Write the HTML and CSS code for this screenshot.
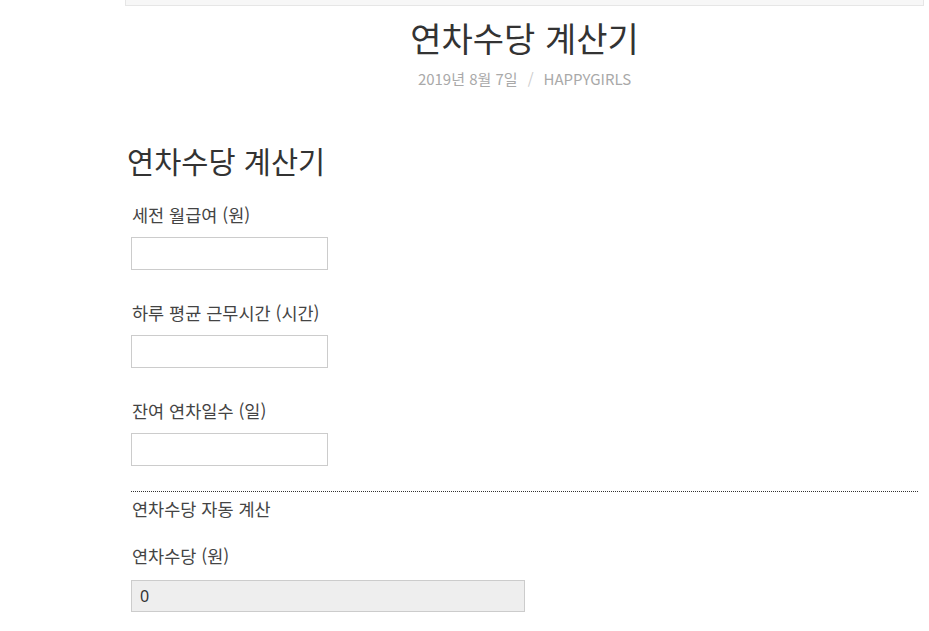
FILE: index.html
```html
<!DOCTYPE html>
<html lang="ko">
<head>
<meta charset="utf-8">
<title>연차수당 계산기</title>
<link rel="stylesheet" href="styles.css">
</head>
<body>
<div class="page">
  <div class="topbar"></div>
  <header class="entry-header">
    <h1 class="entry-title">연차수당 계산기</h1>
    <div class="entry-meta"><span>2019년 8월 7일</span><span class="sep">/</span><span>HAPPYGIRLS</span></div>
  </header>
  <div class="content">
    <h2 class="calc-title">연차수당 계산기</h2>
    <div class="field">
      <label class="label">세전 월급여 (원)</label>
      <input class="input" type="text">
    </div>
    <div class="field">
      <label class="label">하루 평균 근무시간 (시간)</label>
      <input class="input" type="text">
    </div>
    <div class="field">
      <label class="label">잔여 연차일수 (일)</label>
      <input class="input" type="text">
    </div>
    <div class="divider"></div>
    <div class="auto">연차수당 자동 계산</div>
    <div class="field result">
      <label class="label">연차수당 (원)</label>
      <input class="input output" type="text" value="0" readonly>
    </div>
  </div>
</div>
</body>
</html>
```
FILE: styles.css
```css
html, body {
  margin: 0;
  padding: 0;
  background: #fff;
}
body {
  font-family: "Noto Sans CJK KR", "Noto Sans", sans-serif;
  color: #333;
}
.page {
  margin-left: 125px;
  width: 799px;
}
.topbar {
  height: 5px;
  background: #f7f7f7;
  border: 1px solid #e6e6e6;
  border-top: none;
}
.entry-header {
  text-align: center;
}
.entry-title {
  margin: 9px 0 0;
  font-size: 34px;
  font-weight: 400;
  line-height: 46px;
  color: #333;
}
.entry-meta {
  margin-top: 8px;
  font-size: 15px;
  line-height: 20px;
  color: #a9a9a9;
}
.entry-meta .sep {
  margin: 0 10px;
  color: #ccc;
}
.content {
  padding-left: 2px;
  padding-top: 51px;
}
.calc-title {
  margin: 0 0 23px;
  font-size: 29.5px;
  font-weight: 400;
  line-height: 40px;
  color: #333;
}
.field {
  padding-left: 4px;
  margin-bottom: 31px;
}
.label {
  display: block;
  font-size: 17.5px;
  line-height: 24px;
  color: #444;
  margin-bottom: 10px;
  padding-left: 1px;
}
.input {
  display: block;
  box-sizing: border-box;
  width: 197px;
  height: 33px;
  margin: 0;
  border: 1px solid #ccc;
  background: #fff;
  padding: 0 8px;
  font-family: "Noto Sans", sans-serif;
  font-size: 16px;
  color: #333;
  outline: none;
}
.divider {
  margin-left: 4px;
  margin-top: -6px;
  width: 787px;
  border-top: 1px dotted #333;
}
.auto {
  padding-left: 5px;
  margin-top: 5px;
  font-size: 17.5px;
  line-height: 24px;
  color: #444;
}
.result {
  margin-top: 23px;
}
.result .label {
  margin-bottom: 12px;
}
.output {
  width: 394px;
  height: 32px;
  background: #eeeeee;
}
```
